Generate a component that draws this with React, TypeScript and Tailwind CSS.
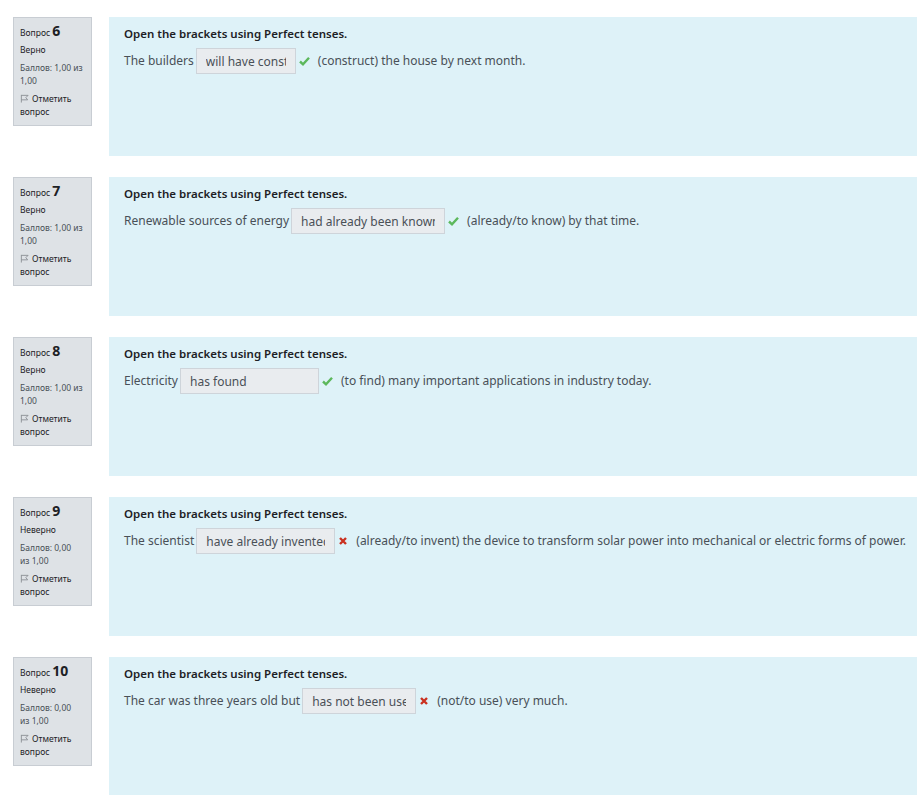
import React from "react";

type Q = {
  num: number;
  correct: boolean;
  before: string;
  answer: string;
  inputW: string;
  after: string;
};

const questions: Q[] = [
  { num: 6, correct: true, before: "The builders", answer: "will have constructed", inputW: "w-[100px]", after: "(construct) the house by next month." },
  { num: 7, correct: true, before: "Renewable sources of energy", answer: "had already been known", inputW: "w-[154px]", after: "(already/to know) by that time." },
  { num: 8, correct: true, before: "Electricity", answer: "has found", inputW: "w-[139px]", after: "(to find) many important applications in industry today." },
  { num: 9, correct: false, before: "The scientist", answer: "have already invented", inputW: "w-[139px]", after: "(already/to invent) the device to transform solar power into mechanical or electric forms of power." },
  { num: 10, correct: false, before: "The car was three years old but", answer: "has not been used", inputW: "w-[114px]", after: "(not/to use) very much." },
];

function Flag() {
  return (
    <svg width="9" height="9" viewBox="0 0 10 10" className="inline-block mr-[3px] -mt-[2px]">
      <path d="M1.5 1 V9.5 M1.5 1.5 H9 L6.5 4 L8.5 6.5 H1.5" fill="none" stroke="#8a8f94" strokeWidth="1" />
    </svg>
  );
}

function Check() {
  return (
    <svg width="11" height="10" viewBox="0 0 11 10">
      <path d="M1 5.5 L4 8.3 L10 1.8" fill="none" stroke="#5cb85c" strokeWidth="2.4" />
    </svg>
  );
}

function Cross() {
  return (
    <svg width="10" height="10" viewBox="0 0 10 10">
      <path d="M2 2 L8 8 M8 2 L2 8" fill="none" stroke="#ca3120" strokeWidth="2.4" />
    </svg>
  );
}

function Question({ q }: { q: Q }) {
  return (
    <div className="flex items-start gap-[17px]">
      <div className="w-[79px] shrink-0 bg-[#dee2e6] border border-[#c8cdd3] px-[6px] pt-[4px] pb-[7px] text-[8.5px] leading-[13px] text-[#1d2125]">
        <div className="leading-[17px]">
          Вопрос <span className="text-[14px] font-bold">{q.num}</span>
        </div>
        <div className="mt-[2px]">{q.correct ? "Верно" : "Неверно"}</div>
        <div className="mt-[5px] text-[#495057]">
          {q.correct ? (
            <>Баллов: 1,00 из<br />1,00</>
          ) : (
            <>Баллов: 0,00<br />из 1,00</>
          )}
        </div>
        <div className="mt-[5px]">
          <Flag />Отметить<br />вопрос
        </div>
      </div>
      <div className="flex-1 h-[139px] bg-[#def2f8] pl-[15px] pt-[9px] text-[#1d2125]">
        <div className="text-[11.5px] font-semibold leading-[16px]">Open the brackets using Perfect tenses.</div>
        <div className="mt-[6px] flex items-center text-[12px] text-[#495057] whitespace-nowrap">
          <span>{q.before}</span>
          <input
            readOnly
            value={q.answer}
            className={`${q.inputW} h-[26px] ml-[2px] bg-[#e9ecef] border border-[#ced4da] px-[9px] text-[12px] text-[#495057] outline-none`}
          />
          <span className="ml-[3px] mr-[8px] flex items-center">{q.correct ? <Check /> : <Cross />}</span>
          <span>{q.after}</span>
        </div>
      </div>
    </div>
  );
}

export default function App() {
  return (
    <div className="w-[917px] bg-white pt-[17px] pl-[13px] flex flex-col gap-[21px] overflow-hidden" style={{ fontFamily: '"Noto Sans", "Open Sans", sans-serif' }}>
      {questions.map((q) => (
        <Question key={q.num} q={q} />
      ))}
    </div>
  );
}
